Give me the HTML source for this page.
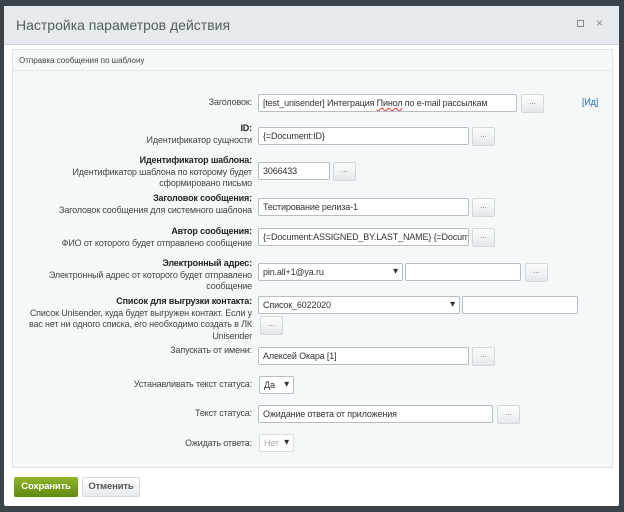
<!DOCTYPE html>
<html><head><meta charset="utf-8"><style>
*{box-sizing:border-box;margin:0;padding:0}
body{width:624px;height:512px;background:#3b4349;font-family:"Liberation Sans",Arial,sans-serif;position:relative;overflow:hidden;color:#333}
.dlg{position:absolute;left:4px;top:6px;width:615px;height:500px;background:#fff;border-radius:2px}
.hd{position:absolute;left:0;top:0;width:615px;height:39px;background:#e4eaed;border-bottom:1px solid #c9d1d5}
.hd .t{position:absolute;left:12px;top:11px;font-size:14px;color:#535c61}
.pn{position:absolute;left:8px;top:43px;width:601px;height:419px;background:#f5f8f9;border:1px solid #dde3e6}
.ph{position:absolute;left:0;top:0;width:599px;height:21px;border-bottom:1px solid #e3e8ea;font-size:8px;padding:6px 6px;color:#444}
.a{position:absolute;font-size:9px;white-space:nowrap;letter-spacing:-0.15px}
.l{text-align:right;right:372px;line-height:11.5px;color:#444}
.l b{color:#222}
.in{position:absolute;background:#fff;border:1px solid #b5bec3;border-radius:2px;font-size:9px;letter-spacing:-0.15px;padding:3px 4px;height:18px;white-space:nowrap;overflow:hidden;color:#333}
.bt{position:absolute;width:23px;height:19px;background:linear-gradient(#fdfdfd,#e4e8ea);border:1px solid #d3d8db;border-radius:2px;font-size:8px;text-align:center;line-height:13px;color:#777}
.sel:after{content:"▾";position:absolute;right:4px;top:2px;font-size:10px;color:#333}
</style></head><body>
<div class="dlg">
<div class="hd"><div class="t">Настройка параметров действия</div>
<div class="a" style="left:573px;top:14px;width:7px;height:7px;border:1px solid #888"></div>
<div class="a" style="left:592px;top:10px;font-size:12px;color:#888">×</div></div>
<div class="pn"><div class="ph">Отправка сообщения по шаблону</div></div>
</div>
<div class="a l" style="top:97px">Заголовок:</div>
<div class="in" style="left:258px;top:94px;width:259px">[test_unisender] Интеграция <span style="text-decoration:underline wavy #d33">Пинол</span> по e-mail рассылкам</div>
<div class="bt" style="left:521px;top:94px">...</div>
<div class="a" style="left:582px;top:97px;color:#2a6ab0">[Ид]</div>

<div class="a l" style="top:123px"><b>ID:</b><br>Идентификатор сущности</div>
<div class="in" style="left:258px;top:127px;width:211px">{=Document:ID}</div>
<div class="bt" style="left:472px;top:127px">...</div>

<div class="a l" style="top:155px"><b>Идентификатор шаблона:</b><br>Идентификатор шаблона по которому будет<br>сформировано письмо</div>
<div class="in" style="left:258px;top:162px;width:72px">3066433</div>
<div class="bt" style="left:333px;top:162px">...</div>

<div class="a l" style="top:193px"><b>Заголовок сообщения:</b><br>Заголовок сообщения для системного шаблона</div>
<div class="in" style="left:258px;top:198px;width:211px">Тестирование релиза-1</div>
<div class="bt" style="left:472px;top:198px">...</div>

<div class="a l" style="top:226px"><b>Автор сообщения:</b><br>ФИО от которого будет отправлено сообщение</div>
<div class="in" style="left:258px;top:228px;width:211px">{=Document:ASSIGNED_BY.LAST_NAME} {=Document:</div>
<div class="bt" style="left:472px;top:228px">...</div>

<div class="a l" style="top:258px"><b>Электронный адрес:</b><br>Электронный адрес от которого будет отправлено<br>сообщение</div>
<div class="in sel" style="left:258px;top:263px;width:145px">pin.all+1@ya.ru</div>
<div class="in" style="left:405px;top:263px;width:116px"></div>
<div class="bt" style="left:525px;top:263px">...</div>

<div class="a l" style="top:296px"><b>Список для выгрузки контакта:</b><br>Список Unisender, куда будет выгружен контакт. Если у<br>вас нет ни одного списка, его необходимо создать в ЛК<br>Unisender</div>
<div class="in sel" style="left:258px;top:296px;width:202px">Список_6022020</div>
<div class="in" style="left:462px;top:296px;width:116px"></div>
<div class="bt" style="left:260px;top:316px">...</div>

<div class="a l" style="top:345px">Запускать от имени:</div>
<div class="in" style="left:258px;top:347px;width:211px">Алексей Окара [1]</div>
<div class="bt" style="left:472px;top:347px">...</div>

<div class="a l" style="top:379px">Устанавливать текст статуса:</div>
<div class="in sel" style="left:259px;top:376px;width:35px">Да</div>

<div class="a l" style="top:408px">Текст статуса:</div>
<div class="in" style="left:258px;top:405px;width:235px">Ожидание ответа от приложения</div>
<div class="bt" style="left:497px;top:405px">...</div>

<div class="a l" style="top:438px">Ожидать ответа:</div>
<div class="in sel" style="left:259px;top:434px;width:35px;color:#aaa;border-color:#d5dbde">Нет</div>

<div class="a" style="left:14px;top:477px;width:64px;height:20px;background:linear-gradient(#8fb52a,#5f8a12);border-radius:2px;color:#fff;font-weight:bold;font-size:9.5px;text-align:center;line-height:20px">Сохранить</div>
<div class="a" style="left:82px;top:477px;width:58px;height:20px;background:linear-gradient(#fff,#e6eaec);border:1px solid #d6dbde;border-radius:2px;color:#555;font-weight:bold;font-size:9.5px;text-align:center;line-height:18px">Отменить</div>
</body></html>
